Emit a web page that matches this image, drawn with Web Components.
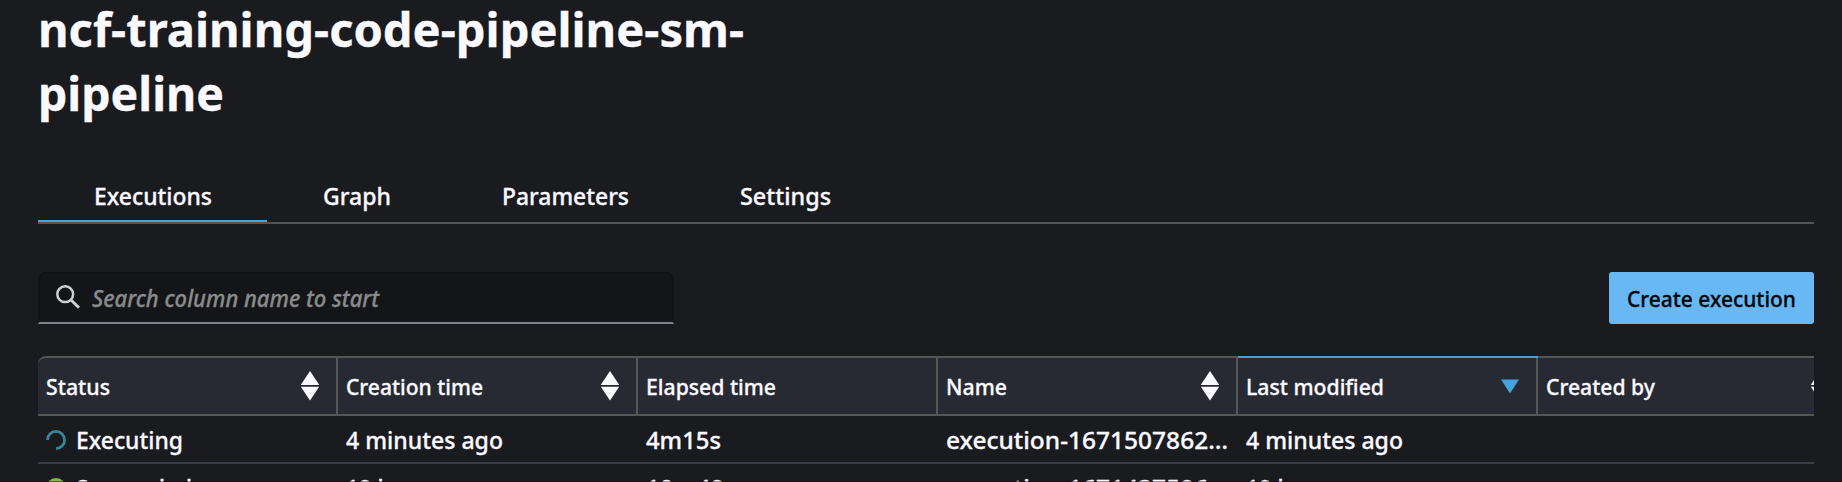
<!DOCTYPE html>
<html lang="en">
<head>
<meta charset="utf-8">
<title>Pipeline executions</title>
<style>
html, body { margin: 0; height: 100%; overflow: hidden; background: #1a1b1f; }
body { font-family: "Noto Sans", "Open Sans", sans-serif; color: #faf9ff; }
</style>
</head>
<body>
<pipeline-page></pipeline-page>
<script>
const define = (name, html, init) => customElements.define(name, class extends HTMLElement {
  connectedCallback() {
    if (this.shadowRoot) return;
    this.attachShadow({ mode: 'open' }).innerHTML = html;
    if (init) init.call(this, this.shadowRoot);
  }
});

/* A run of text condensed to the width given in its "w" attribute. */
define('fit-text', `
<style>
:host { display: block; white-space: nowrap; width: max-content; -webkit-text-stroke: 0.3px currentColor; }
span { display: inline-block; transform-origin: 0 50%; }
</style><span><slot></slot></span>`, function (root) {
  const w = parseFloat(this.getAttribute('w'));
  const span = root.querySelector('span');
  const natural = span.getBoundingClientRect().width;
  if (w && natural) { this.style.width = w + 'px'; span.style.transform = 'scaleX(' + w / natural + ')'; }
});

define('page-title', `
<style>
:host { display: block; height: 166px; box-sizing: border-box; font-size: 47px; font-weight: 700; line-height: 64px; margin-top: -3px; }
div { height: 64px; }
</style><div><slot name="first"></slot></div><div><slot name="second"></slot></div>`);

define('tab-item', `
<style>
:host { display: block; box-sizing: border-box; height: 59px; padding: 16px 55px 0 56px; font-size: 24px; font-weight: 500; line-height: 33px; border-bottom: 2px solid transparent; }
:host([active]) { border-color: #44a3dc; }
</style><slot></slot>`);

define('tab-bar', `
<style>
:host { display: flex; height: 59px; border-bottom: 2px solid #545454; }
</style><slot></slot>`);

define('search-field', `
<style>
:host { display: flex; box-sizing: border-box; width: 636px; height: 52px; border: 1px solid #111215; border-bottom: 2px solid #84838c; border-radius: 8px 8px 0 0; background: #141518; color: #8a8a8a; font-size: 23px; font-style: italic; font-weight: 500; line-height: 32px; padding: 9px 0 0 17px; }
svg { width: 24px; height: 24px; margin: 3px 12px 0 0; flex: none; }
</style>
<svg viewBox="0 0 24 24" fill="none" stroke="#cfcfcf" stroke-width="2.5"><circle cx="9.2" cy="9.2" r="7.9"/><path d="M14.8 14.8L23 22.8" stroke-width="3"/></svg><slot></slot>`);

define('primary-button', `
<style>
:host { display: block; box-sizing: border-box; width: 205px; height: 52px; border-radius: 3px; background: #68b8f4; color: #05070a; font-size: 22px; font-weight: 500; line-height: 30px; padding: 11px 0 0 18px; }
</style><slot></slot>`);

define('sort-icon', `
<style>
:host { display: block; flex: none; width: 18px; height: 30px; margin-top: 1px; }
svg { display: block; }
</style>
<svg width="18" height="30" viewBox="0 0 18 30"></svg>`, function (root) {
  root.querySelector('svg').innerHTML = this.hasAttribute('desc')
    ? '<path d="M0 8.5H18L9 22.5Z" fill="#44a3dc"/>'
    : '<path d="M9 0L18 13.4V14H0V13.4Z M0 15.8H18V16L9 29.6L0 16Z" fill="#faf9ff"/>';
});

define('header-cell', `
<style>
:host { display: flex; justify-content: space-between; box-sizing: border-box; width: 300px; flex: none; height: 60px; padding: 12px 17px 0 8px; border: solid #565656; border-width: 2px 2px 2px 0; background: #282a33; font-size: 22px; font-weight: 500; line-height: 32px; }
:host([first]) { border-top-left-radius: 8px; }
:host([wide]) { width: 310px; }
</style><slot></slot>`);

define('data-row', `
<style>
:host { display: grid; grid-template-columns: repeat(6, 300px); box-sizing: border-box; height: 48px; border-bottom: 2px solid #3c3b48; font-size: 24px; font-weight: 500; line-height: 34px; }
::slotted(*) { padding: 7px 0 0 8px; display: flex !important; }
</style><slot></slot>`);

define('status-cell', `
<style>
svg { width: 20px; height: 20px; flex: none; margin: 7px 10px 0 0; }
</style><svg viewBox="0 0 20 20"></svg><slot></slot>`, function (root) {
  root.querySelector('svg').innerHTML = this.getAttribute('kind') === 'done'
    ? '<circle cx="10" cy="10" r="10" fill="#7fba42"/>'
    : '<path d="M1.4 10A8.6 8.6 0 1 1 10 18.6" fill="none" stroke="#37879a" stroke-width="2.8"/>';
});

define('executions-table', `
<style>
:host { display: block; overflow: hidden; height: 126px; }
.head { display: flex; }
.accent { height: 2px; width: 300px; margin: 0 0 0 1200px; background: #44a3dc; position: relative; }
.wrap { margin-top: -2px; }
</style>
<div class="accent"></div>
<div class="wrap"><div class="head">
<header-cell first><fit-text w="64">Status</fit-text><sort-icon></sort-icon></header-cell>
<header-cell><fit-text w="137">Creation time</fit-text><sort-icon></sort-icon></header-cell>
<header-cell><fit-text w="130">Elapsed time</fit-text></header-cell>
<header-cell><fit-text w="61">Name</fit-text><sort-icon></sort-icon></header-cell>
<header-cell><fit-text w="138">Last modified</fit-text><sort-icon desc></sort-icon></header-cell>
<header-cell wide><fit-text w="109">Created by</fit-text><sort-icon></sort-icon></header-cell>
</div>
<data-row>
<status-cell><fit-text w="107">Executing</fit-text></status-cell>
<div><fit-text w="157">4 minutes ago</fit-text></div>
<div><fit-text w="75">4m15s</fit-text></div>
<div><fit-text w="282">execution-1671507862…</fit-text></div>
<div><fit-text w="157">4 minutes ago</fit-text></div>
</data-row>
<data-row>
<status-cell kind="done"><fit-text w="116">Succeeded</fit-text></status-cell>
<div><fit-text w="140">19 hours ago</fit-text></div>
<div><fit-text w="90">10m49s</fit-text></div>
<div><fit-text w="282">execution-1671437596…</fit-text></div>
<div><fit-text w="140">19 hours ago</fit-text></div>
</data-row></div>`);

define('pipeline-page', `
<style>
:host { display: flow-root; height: 482px; padding: 0 28px 0 38px; overflow: hidden; box-sizing: border-box; position: relative; }
:host::after { content: ""; position: absolute; left: 0; right: 0; bottom: 0; height: 1px; background: rgba(24, 0, 8, 0.45); }
.tools { display: flex; justify-content: space-between; margin: 48px 0 32px; }
</style>
<page-title><fit-text slot="first" w="706">ncf-training-code-pipeline-sm-</fit-text><fit-text slot="second" w="186">pipeline</fit-text></page-title>
<tab-bar>
<tab-item active><fit-text w="118">Executions</fit-text></tab-item>
<tab-item><fit-text w="68">Graph</fit-text></tab-item>
<tab-item><fit-text w="127">Parameters</fit-text></tab-item>
<tab-item><fit-text w="91">Settings</fit-text></tab-item>
</tab-bar>
<div class="tools">
<search-field><fit-text w="287">Search column name to start</fit-text></search-field>
<primary-button><fit-text w="169">Create execution</fit-text></primary-button>
</div>
<executions-table></executions-table>`);
</script>
</body>
</html>
